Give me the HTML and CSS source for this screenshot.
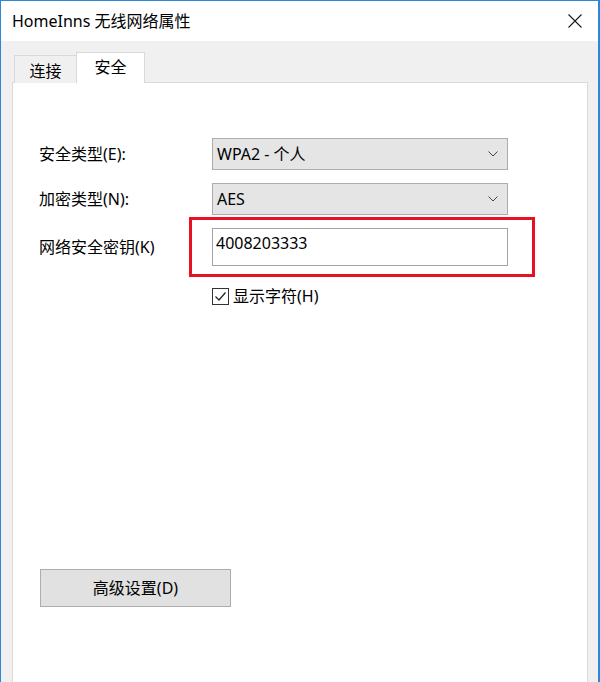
FILE: index.html
```html
<!DOCTYPE html>
<html lang="zh-CN">
<head>
<meta charset="utf-8">
<title>HomeInns 无线网络属性</title>
<link rel="stylesheet" href="styles.css">
</head>
<body>
<div class="window">
  <div class="titlebar">
    <span class="title">HomeInns 无线网络属性</span>
    <svg class="close" width="14" height="14" viewBox="0 0 14 14">
      <path d="M0.5 0.5 L13.5 13.5 M13.5 0.5 L0.5 13.5" stroke="#1a1a1a" stroke-width="1.1" fill="none"/>
    </svg>
  </div>
  <div class="content">
    <div class="tabs">
      <div class="tab">连接</div>
      <div class="tab active">安全</div>
    </div>
    <div class="panel">
      <div class="form">
        <div class="label">安全类型(E):</div>
        <div class="select"><span>WPA2 - 个人</span>
          <svg class="chev" width="10" height="6" viewBox="0 0 10 6"><path d="M0.5 0.5 L5 5 L9.5 0.5" stroke="#444" stroke-width="1" fill="none"/></svg>
        </div>
        <div class="label">加密类型(N):</div>
        <div class="select"><span>AES</span>
          <svg class="chev" width="10" height="6" viewBox="0 0 10 6"><path d="M0.5 0.5 L5 5 L9.5 0.5" stroke="#444" stroke-width="1" fill="none"/></svg>
        </div>
        <div class="label">网络安全密钥(K)</div>
        <div class="keywrap">
          <div class="input">4008203333</div>
          <div class="highlight"></div>
        </div>
      </div>
      <div class="check">
        <span class="box"><svg width="15" height="15" viewBox="0 0 15 15"><path d="M2.5 7.5 L6 11 L12.5 3.5" stroke="#222" stroke-width="1.2" fill="none"/></svg></span>
        <span>显示字符(H)</span>
      </div>
      <div class="btn">高级设置(D)</div>
    </div>
  </div>
</div>
</body>
</html>
```

FILE: styles.css
```css
* { box-sizing: border-box; }
html, body { margin: 0; padding: 0; background: #f0f0f0; }
body {
  font-family: "Noto Sans", "Noto Sans CJK SC", sans-serif;
  font-size: 16px;
  color: #000;
}
.window {
  width: 600px;
  height: 682px;
  border-top: 1px solid #2b88d8;
  border-left: 1px solid #2b88d8;
  border-right: 2px solid #2b88d8;
  background: #f0f0f0;
  overflow: hidden;
  display: flex;
  flex-direction: column;
}
.titlebar {
  flex-shrink: 0;
  height: 40px;
  background: #fff;
  display: flex;
  align-items: center;
  justify-content: space-between;
  padding: 0 16px 0 11px;
}
.title { font-size: 16px; line-height: 20px; color: #000; }
.close { display: block; }
.content { flex: 1; min-height: 0; overflow: hidden; background: #f0f0f0; }
.tabs {
  display: flex;
  align-items: flex-end;
  padding: 11px 0 0 13px;
  margin-bottom: -1px;
  height: 42px;
}
.tab {
  height: 28px;
  width: 63px;
  border: 1px solid #d9d9d9;
  border-bottom: none;
  background: #f0f0f0;
  display: flex;
  align-items: center;
  justify-content: center;
  line-height: 20px;
  padding-top: 3px;
}
.tab.active {
  position: relative;
  z-index: 1;
  height: 31px;
  width: 69px;
  margin-left: -1px;
  background: #fff;
  padding-top: 0;
  padding-bottom: 3px;
}
.panel {
  margin-left: 11px;
  width: 576px;
  height: 640px;
  background: #fff;
  border: 1px solid #d9d9d9;
  padding: 55px 0 0 26px;
}
.form {
  display: grid;
  grid-template-columns: 173px 296px;
  grid-template-rows: 32px 32px 38px;
  row-gap: 13px;
}
.label { align-self: center; line-height: 20px; }
.select {
  background: #e5e5e5;
  border: 1px solid #adadad;
  display: flex;
  align-items: center;
  justify-content: space-between;
  padding: 0 9px 0 4px;
  line-height: 20px;
}
.chev { display: block; }
.keywrap { position: relative; }
.input {
  height: 38px;
  border: 1px solid #a3a3a3;
  background: #fff;
  padding: 3px 3px;
  line-height: 22px;
}
.highlight {
  position: absolute;
  left: -23px;
  top: -11px;
  width: 346px;
  height: 60px;
  border: 3px solid #e81123;
}
.check {
  display: flex;
  align-items: center;
  gap: 4px;
  margin: 20px 0 0 173px;
  line-height: 20px;
}
.box {
  width: 17px;
  height: 17px;
  border: 1px solid #333;
  display: flex;
  align-items: center;
  justify-content: center;
  background: #fff;
}
.box svg { display: block; }
.btn {
  margin: 263px 0 0 1px;
  width: 191px;
  height: 38px;
  background: #e1e1e1;
  border: 1px solid #adadad;
  display: flex;
  align-items: center;
  justify-content: center;
  line-height: 20px;
}
```
